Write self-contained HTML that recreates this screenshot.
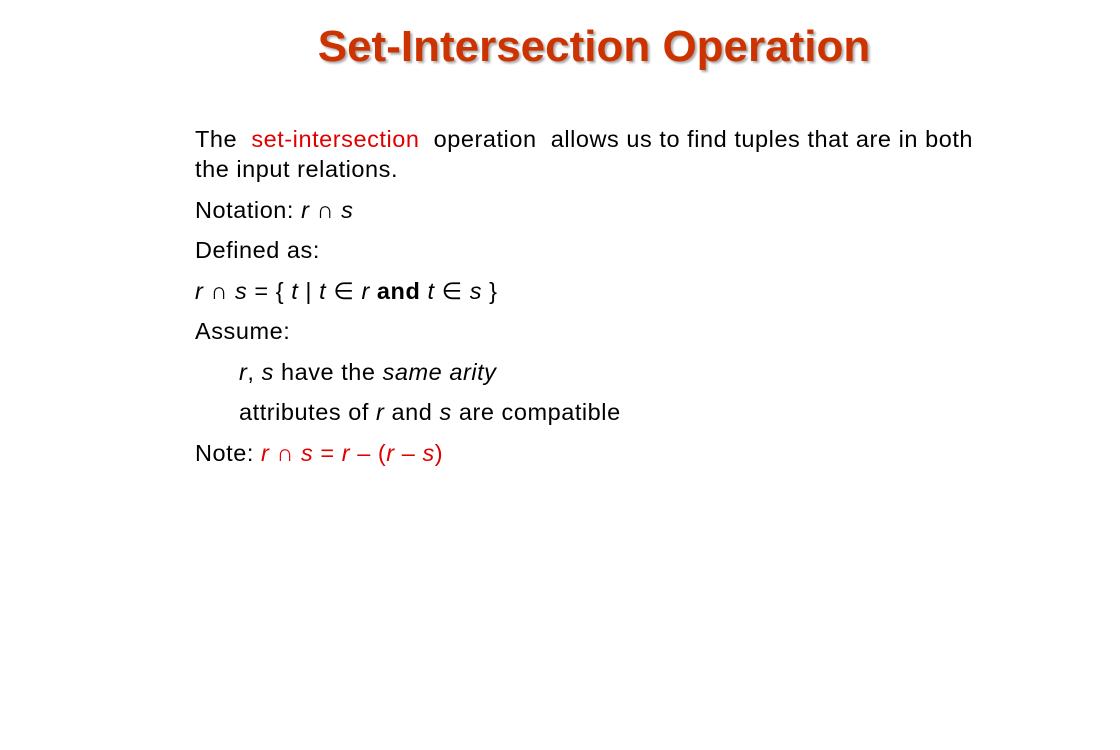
<!DOCTYPE html>
<html><head><meta charset="utf-8"><style>
body{margin:0;width:1120px;height:750px;background:#fff;position:relative;font-family:"Liberation Sans",sans-serif;color:#000;overflow:hidden}
.t{position:absolute;left:0;width:1188px;text-align:center;top:22px;font-size:44px;line-height:50px;font-weight:bold;color:#cc3300;text-shadow:2px 2px 2px #aaa;white-space:nowrap}
.l{position:absolute;left:195px;font-size:23.5px;line-height:26px;letter-spacing:0.55px;white-space:nowrap}
.r{color:#e00000}
i{font-style:italic}
</style></head><body>
<div class="t">Set-Intersection Operation</div>
<div class="l" style="top:126px">The &nbsp;<span class="r">set-intersection</span>&nbsp; operation &nbsp;allows us to find tuples that are in both</div>
<div class="l" style="top:156px">the input relations.</div>
<div class="l" style="top:197px">Notation: <i>r</i> ∩ <i>s</i></div>
<div class="l" style="top:237px">Defined as:</div>
<div class="l" style="top:278px"><i>r</i> ∩ <i>s</i> = { <i>t</i> | <i>t</i> ∈ <i>r</i> <b>and</b> <i>t</i> ∈ <i>s</i> }</div>
<div class="l" style="top:318px">Assume:</div>
<div class="l" style="top:359px;left:239px"><i>r</i>, <i>s</i> have the <i>same arity</i></div>
<div class="l" style="top:399px;left:239px">attributes of <i>r</i> and <i>s</i> are compatible</div>
<div class="l" style="top:440px">Note: <span class="r"><i>r</i> ∩ <i>s</i> = <i>r</i> – (<i>r</i> – <i>s</i>)</span></div>
</body></html>
